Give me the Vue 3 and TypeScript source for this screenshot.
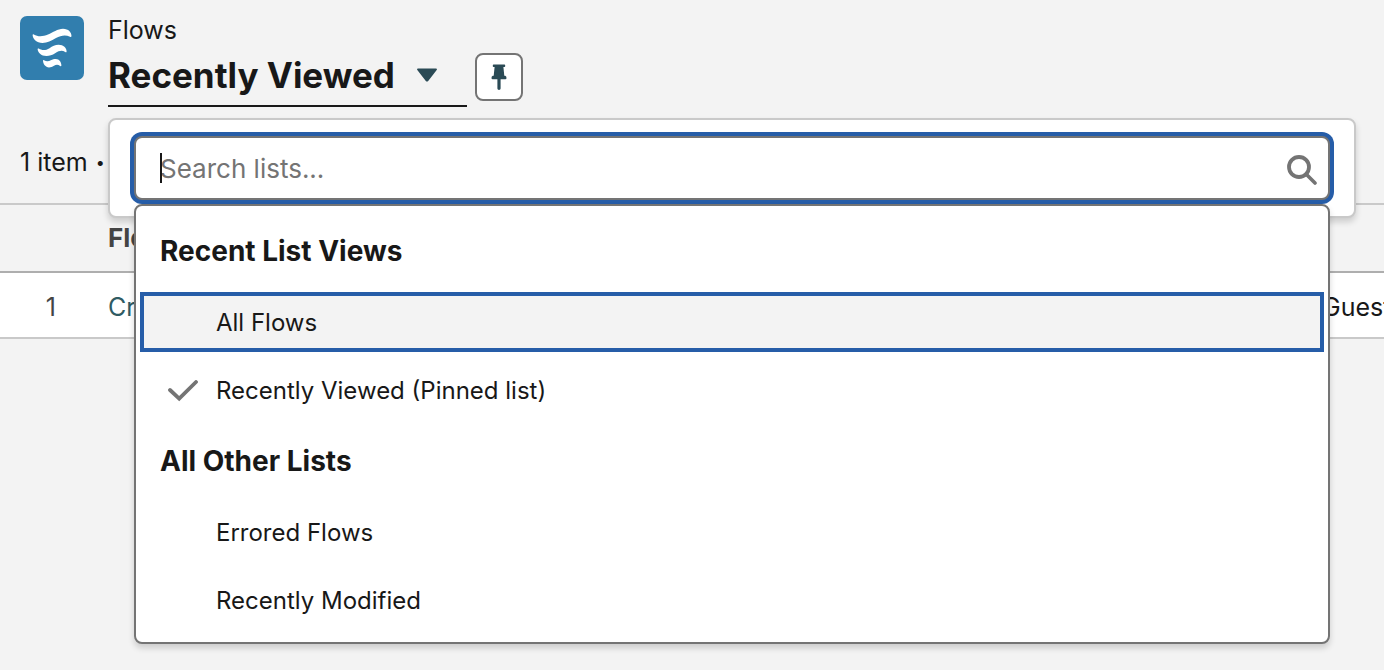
<script setup lang="ts">
import { ref } from 'vue'

interface ListView {
  id: string
  label: string
}

interface ListGroup {
  title: string
  views: ListView[]
}

const query = ref('')
const current = ref('recent')
const focused = ref('all')

const groups: ListGroup[] = [
  {
    title: 'Recent List Views',
    views: [
      { id: 'all', label: 'All Flows' },
      { id: 'recent', label: 'Recently Viewed (Pinned list)' },
    ],
  },
  {
    title: 'All Other Lists',
    views: [
      { id: 'errored', label: 'Errored Flows' },
      { id: 'modified', label: 'Recently Modified' },
    ],
  },
]
</script>

<template>
  <main class="page">
    <header class="header">
      <svg class="logo" viewBox="0 0 64 64" aria-hidden="true">
        <rect width="64" height="64" rx="7" fill="#317eae" />
        <g fill="#fff">
          <path d="M12.6 19 C12.6 18.4 13.2 18.2 13.8 18.5 C18 21 23 20.6 28 18.6 C33 16.6 37.5 12.8 43 12.8 C48.5 12.8 51.5 16.5 51.5 20 C51.5 21 50.8 21.3 50 20.8 C45.5 18.4 41 19.4 36 22 C31 24.8 27.5 27 22.5 27 C16.5 27 12.8 23 12.6 19 Z" />
          <path d="M17.6 33 C17.6 32.4 18.2 32.2 18.8 32.6 C22 34.8 26 34.4 29.5 32.2 C32.5 30.2 35 28.8 38.6 28.8 C43.5 28.8 46.6 32 46.6 35.4 C46.6 36.3 45.9 36.5 45.2 36 C42 34 39 34.8 35.5 37 C32 39.2 29.5 40 26.5 40 C21 40 17.8 36.5 17.6 33 Z" />
          <path d="M23 44.6 C23 44.1 23.5 43.9 24 44.2 C26.4 45.8 28.6 45.5 30.8 44.3 C32.6 43.3 34 43 35.8 43 C39.4 43 41.4 46.5 41.4 49.4 C41.4 50.2 40.8 50.4 40.2 50 C38 48.2 36.2 48.3 34 49.7 C32.2 50.8 30.8 51.4 29 51.4 C25.5 51.4 23 48 23 44.6 Z" />
        </g>
      </svg>
      <div class="heading">
        <p class="object-name">Flows</p>
        <button class="view-picker" type="button" aria-haspopup="listbox" aria-expanded="true">
          <span class="view-name">Recently Viewed</span>
          <svg class="arrow" viewBox="0 0 20 14" aria-hidden="true">
            <path d="M1 .5 H19 Q20.6 .8 19.5 2.2 L11.2 12.9 Q10 14.2 8.8 12.9 L.5 2.2 Q-.6 .8 1 .5 Z" fill="#2a4a55" />
          </svg>
        </button>
      </div>
      <button class="pin" type="button" aria-label="Unpin this list view">
        <svg viewBox="0 0 16 26" aria-hidden="true">
          <path d="M2.6 .5 H13.4 Q14.2 .5 14.2 1.4 V2.2 Q14.2 3 13.4 3 H12.4 L13.3 11.8 H14.2 Q15.5 12.3 15.5 14 Q15.5 15.3 14.4 15.3 H9.6 V24.6 Q9.6 26 8 26 Q6.4 26 6.4 24.6 V15.3 H1.6 Q.5 15.3 .5 14 Q.5 12.3 1.8 11.8 H2.7 L3.6 3 H2.6 Q1.8 3 1.8 2.2 V1.4 Q1.8 .5 2.6 .5 Z" fill="#2a4a55" />
        </svg>
      </button>
    </header>

    <p class="summary">1 item <span class="bullet">•</span></p>

    <table class="records">
      <thead>
        <tr>
          <th class="number"></th>
          <th>Flow Label</th>
          <th class="owner"></th>
        </tr>
      </thead>
      <tbody>
        <tr>
          <td class="number">1</td>
          <td><a href="#">Create</a></td>
          <td class="owner">Guest</td>
        </tr>
      </tbody>
    </table>

    <section class="panel" aria-label="List views">
      <div class="search">
        <input
          v-model="query"
          type="text"
          role="combobox"
          aria-label="Search lists"
          aria-expanded="true"
          aria-controls="list-views"
          placeholder="Search lists..."
        />
        <span class="caret"></span>
        <svg class="search-icon" viewBox="0 0 30 30" fill="none" stroke="#747474" aria-hidden="true">
          <circle cx="12" cy="12" r="10" stroke-width="3.8" />
          <path d="M19 19 L28 28" stroke-width="3.6" stroke-linecap="round" />
        </svg>
      </div>
      <div id="list-views" class="dropdown" role="listbox">
        <div v-for="group in groups" :key="group.title" role="group" :aria-label="group.title">
          <h3>{{ group.title }}</h3>
          <button
            v-for="view in group.views"
            :key="view.id"
            class="option"
            :class="{ focused: view.id === focused }"
            type="button"
            role="option"
            :aria-selected="view.id === current"
            @mouseenter="focused = view.id"
            @click="current = view.id"
          >
            <span class="mark">
              <svg v-if="view.id === current" viewBox="0 0 30 22" fill="none" stroke="#747474" aria-hidden="true">
                <path d="M2 10 L11.2 18.6 L28 2" stroke-width="3.8" stroke-linecap="round" />
              </svg>
            </span>
            {{ view.label }}
          </button>
        </div>
      </div>
    </section>
  </main>
</template>

<style>
html,
body {
  background: #f3f3f3;
}
</style>

<style scoped>
.page {
  position: relative;
  min-height: 100vh;
  overflow: hidden;
  color: #181818;
  font-family: Inter, "Liberation Sans", sans-serif;
  font-size: 24px;
  line-height: 32px;
}

.page * {
  box-sizing: border-box;
}

button,
input {
  font: inherit;
  color: inherit;
}

button {
  cursor: pointer;
}

.header {
  display: flex;
  align-items: flex-start;
  padding: 16px 20px 0;
}

.logo {
  width: 64px;
  height: 64px;
  margin-right: 24px;
}

.object-name {
  margin: 0;
  font-size: 25px;
  line-height: 28px;
}

.view-picker {
  display: flex;
  align-items: center;
  gap: 22px;
  height: 63px;
  padding: 0 30px 0 0;
  border: 0;
  border-bottom: 2px solid #181818;
  background: none;
  font-size: 35px;
  font-weight: 700;
  line-height: 48px;
}

.arrow {
  width: 20px;
  height: 14px;
}

.pin {
  display: flex;
  align-items: center;
  justify-content: center;
  width: 48px;
  height: 48px;
  margin: 37px 0 0 8px;
  padding: 0;
  border: 2px solid #747474;
  border-radius: 8px;
  background: #fff;
}

.pin svg {
  width: 16px;
  height: 26px;
}

.summary {
  display: flex;
  gap: 8px;
  margin: 0;
  padding: 39px 20px 25px;
  font-size: 25px;
}

.bullet {
  font-size: 16px;
}

.records {
  width: 100%;
  border-spacing: 0;
  border-top: 2px solid #c9c9c9;
  table-layout: fixed;
}

.records th,
.records td {
  height: 66px;
  padding: 0;
  text-align: left;
}

.records th {
  height: 68px;
  border-bottom: 2px solid #aeaeae;
  color: #444;
  font-size: 26px;
  font-weight: 700;
}

.records td {
  padding-top: 4px;
  border-bottom: 2px solid #c9c9c9;
  background: #fff;
  font-size: 25px;
}

.records .number {
  width: 108px;
  padding-right: 52px;
  color: #444;
  text-align: right;
}

.records .owner {
  width: 62px;
  overflow: hidden;
  white-space: nowrap;
}

.records a {
  color: #2f5b63;
  text-decoration: none;
}

.panel {
  position: absolute;
  top: 118px;
  right: 28px;
  left: 108px;
  height: 100px;
  padding: 16px 24px;
  border: 2px solid #c9c9c9;
  border-radius: 8px;
  background: #fff;
  box-shadow: 0 4px 6px rgba(0, 0, 0, 0.16);
}

.search {
  position: relative;
}

.search input {
  display: block;
  width: 100%;
  height: 64px;
  padding: 0 68px 0 24px;
  border: 2px solid #747474;
  border-radius: 8px;
  outline: 0;
  background: #fff;
  box-shadow: 0 0 0 4px #265da8;
  font-size: 26px;
}

.search input::placeholder {
  color: #747474;
  opacity: 1;
}

.caret {
  position: absolute;
  top: 17px;
  left: 26px;
  width: 2px;
  height: 30px;
  background: #181818;
}

.search-icon {
  position: absolute;
  top: 19px;
  right: 13px;
  width: 30px;
  height: 30px;
}

.dropdown {
  position: relative;
  margin-top: 4px;
  padding: 8px 4px;
  border: 2px solid #747474;
  border-radius: 8px;
  background: #fff;
  box-shadow: 0 4px 6px rgba(0, 0, 0, 0.16);
}

.dropdown h3 {
  margin: 0;
  padding: 21px 20px;
  font-size: 28px;
  font-weight: 700;
  line-height: 32px;
}

.option {
  display: flex;
  align-items: center;
  width: 100%;
  height: 60px;
  margin: 4px 0 8px;
  padding: 2px 24px 0;
  border: 4px solid transparent;
  background: none;
  text-align: left;
}

.option:last-child {
  margin-bottom: 4px;
}

.option.focused {
  border-color: #265da8;
  background: #f3f3f3;
}

.mark {
  display: flex;
  width: 48px;
}

.mark svg {
  width: 30px;
  height: 22px;
}
</style>
